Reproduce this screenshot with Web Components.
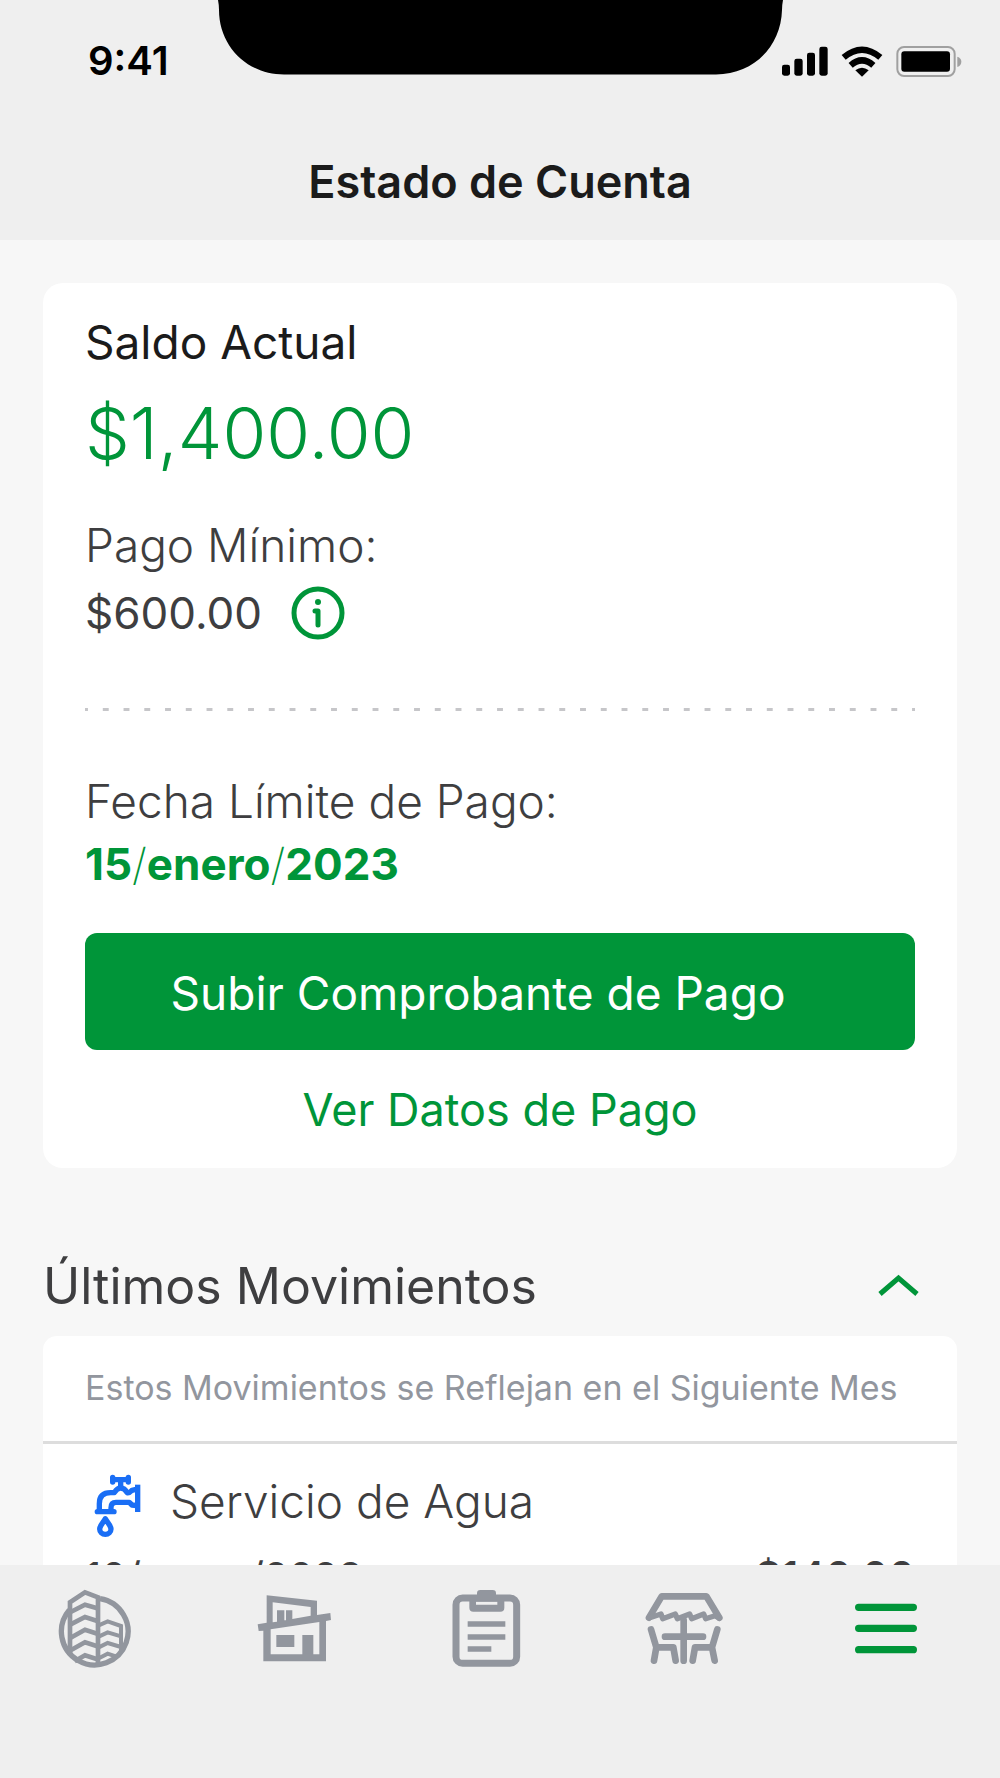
<!DOCTYPE html>
<html lang="es">
<head>
<meta charset="utf-8">
<meta name="viewport" content="width=device-width, initial-scale=1">
<title>Estado de Cuenta</title>
<style>
  :root {
    --green: #009539;
    --ink: #1b1b1b;
    --text: #3e3e40;
    --muted: #92969e;
    --bar: #efefef;
    --page: #f7f7f7;
    --gutter: 43px;
    --inset: 42px;
  }
  html, body { height: 100%; }
  body {
    margin: 0;
    background: var(--page);
    color: var(--text);
    font: 300 46px/56px Inter, "Liberation Sans", sans-serif;
  }
</style>
</head>
<body>
<account-app>
  <status-bar slot="top" time="9:41"></status-bar>
  <screen-title slot="top">Estado de Cuenta</screen-title>

  <balance-card minimum="$600.00" due="15/enero/2023">
    <span slot="label">Saldo Actual</span>
    <span slot="amount">$1,400.00</span>
  </balance-card>

  <movement-list heading="Últimos Movimientos">
    <span slot="note">Estos Movimientos se Reflejan en el Siguiente Mes</span>
    <movement-item date="10/enero/2023" amount="$140.00">Servicio de Agua</movement-item>
  </movement-list>

  <tab-bar slot="bottom"></tab-bar>
</account-app>

<script>
  const define = (name, render) => customElements.define(name, class extends HTMLElement {
    constructor() {
      super();
      this.attachShadow({ mode: 'open' });
    }
    connectedCallback() {
      this.shadowRoot.innerHTML =
        '<style>*{box-sizing:border-box}h1,h2,p,dl,dd,dt{margin:0;font:inherit}button{margin:0;padding:0;border:0;background:none;color:inherit;font:inherit;cursor:pointer}a{color:inherit;text-decoration:none}svg{display:block;flex:none}</style>' +
        render(this);
    }
  });

  define('account-app', () => `
    <style>
      :host { display: flex; flex-direction: column; height: 100vh; }
      header { background: var(--bar); }
      main { flex: 1; min-height: 0; overflow-y: auto; scrollbar-width: none; padding: 43px var(--gutter) 0; }
    </style>
    <header><slot name="top"></slot></header>
    <main><slot></slot></main>
    <slot name="bottom"></slot>`);

  define('status-bar', el => `
    <style>
      :host { display: grid; grid-template-columns: 1fr 564px 1fr; height: 90px; color: #000; font: 600 40px/48px Inter, sans-serif; }
      .notch { display: block; }
      .time { padding: 37px 0 0 88px; }
      .signals { display: flex; align-items: center; gap: 13px; height: 48px; margin-top: 37px; }
    </style>
    <div class="time">${el.getAttribute('time')}</div>
    <svg class="notch" width="566" height="75" viewBox="0 0 566 75" aria-hidden="true">
      <path d="M0 0H565Q564 5 564 10C563 46 536 74.500 498 74.500H66C29 74.500 1 46 1 10Q1 5 0 0Z"/>
    </svg>
    <div class="signals">
      <svg width="46" height="31" viewBox="69 49 138 93" aria-label="Señal">
        <rect x="69" y="105" width="24" height="33" rx="7"/><rect x="106" y="87" width="25" height="51" rx="7"/>
        <rect x="144" y="69" width="24" height="69" rx="7"/><rect x="181" y="51" width="25" height="87" rx="7"/>
      </svg>
      <svg width="42" height="31" viewBox="244 46 126 93" aria-label="Wi-Fi">
        <path d="M287 119Q307 103 327 119L307 138Z"/>
        <path d="M252 80Q307 34 362 80M273 104Q307 74 341 104" fill="none" stroke="#000" stroke-width="19"/>
      </svg>
      <svg width="66" height="31" viewBox="407 47 198 93" aria-label="Batería">
        <rect x="411" y="50" width="172" height="87" rx="20" fill="none" stroke="#a0a0a0" stroke-width="6"/>
        <rect x="423" y="63" width="146" height="61" rx="9"/>
        <path d="M591 79Q603 83 603 94T591 110Z" fill="#a0a0a0"/>
      </svg>
    </div>`);

  define('screen-title', () => `
    <style>
      :host { display: block; padding: 64px 0 30px; text-align: center; color: var(--ink); }
      h1 { font-size: 45px; font-weight: 600; }
    </style>
    <h1><slot></slot></h1>`);

  define('balance-card', el => `
    <style>
      :host { display: flex; flex-direction: column; padding: 31px var(--inset) 30px; border-radius: 20px; background: #fff; }
      .label { color: var(--ink); font-weight: 400; }
      .amount { margin-top: 21px; color: var(--green); font-size: 71px; line-height: 84px; }
      .pair { margin-top: 42px; }
      .minimum { display: flex; align-items: center; gap: 29px; height: 56px; margin-top: 12px; font-size: 44px; font-weight: 400; }
      .rule {
        height: 3px; margin: 67px 0 62px;
        background: linear-gradient(90deg, #c6c6c9 3px, transparent 3px calc(100% - 3px), #c6c6c9 calc(100% - 3px)) 0 0 / 21px 3px round;
      }
      .due { margin-top: 7px; color: var(--green); font-size: 44px; font-weight: 700; }
      .slash { font-weight: 200; }
      .upload { height: 117px; margin-top: 41px; padding: 2px 44px 0 0; border-radius: 12px; background: var(--green); color: #fff; font-weight: 400; }
      .details { align-self: center; margin-top: 32px; color: var(--green); font-size: 45px; font-weight: 400; }
    </style>
    <p class="label"><slot name="label"></slot></p>
    <p class="amount"><slot name="amount"></slot></p>
    <dl class="pair">
      <dt>Pago Mínimo:</dt>
      <dd class="minimum">${el.getAttribute('minimum')}
        <button aria-label="Información">
          <svg width="54" height="54" viewBox="0 0 54 54" fill="none" stroke="var(--green)" stroke-linecap="round" stroke-linejoin="round">
            <circle cx="27" cy="27" r="24" stroke-width="5"/>
            <path d="M24 25H27V39" stroke-width="5"/><circle cx="27" cy="16" r="3" fill="var(--green)" stroke="none"/>
          </svg>
        </button>
      </dd>
    </dl>
    <div class="rule" role="separator"></div>
    <dl>
      <dt>Fecha Límite de Pago:</dt>
      <dd class="due">${el.getAttribute('due').replaceAll('/', '<span class="slash">/</span>')}</dd>
    </dl>
    <button class="upload">Subir Comprobante de Pago</button>
    <a class="details" href="#datos">Ver Datos de Pago</a>`);

  define('movement-list', el => `
    <style>
      :host { display: block; margin-top: 88px; }
      header { display: flex; align-items: center; justify-content: space-between; padding-right: 37px; }
      h2 { font-size: 50px; line-height: 60px; font-weight: 400; }
      section { margin-top: 20px; border-radius: 14px 14px 0 0; background: #fff; }
      .note { padding: 30px var(--inset) 31px; border-bottom: 3px solid #dddddd; color: var(--muted); font-size: 34px; line-height: 44px; font-weight: 400; white-space: nowrap; }
    </style>
    <header>
      <h2>${el.getAttribute('heading')}</h2>
      <button aria-label="Contraer" aria-expanded="true">
        <svg width="43" height="24" viewBox="0 0 43 24" fill="none" stroke="var(--green)" stroke-width="5"><path d="M3 20L21.500 4L40 20"/></svg>
      </button>
    </header>
    <section>
      <p class="note"><slot name="note"></slot></p>
      <slot></slot>
    </section>`);

  define('movement-item', el => `
    <style>
      :host { display: block; padding: 29px var(--inset) 40px; }
      .name { display: flex; gap: 25px; height: 64px; }
      .facts { display: flex; justify-content: space-between; align-items: baseline; margin-top: 15px; font-size: 40px; line-height: 48px; font-weight: 400; }
      .amount { font-size: 41px; font-weight: 500; }
    </style>
    <div class="name">
      <svg width="60" height="64" viewBox="135 42 180 192" fill="none" stroke="#1a6ef5" stroke-width="16" stroke-linecap="round" stroke-linejoin="round" aria-hidden="true">
        <path d="M218 55V69M265 55V69M218 62H265M242 66V84"/>
        <path d="M178 152V134Q178 101 212 101H223Q232 87 242 87Q254 87 261 101Q268 103 276 94L292 90"/>
        <path d="M213 152V146Q213 130 228 130H268L276 138L290 140"/>
        <path d="M172 158H222"/>
        <path d="M293 85V151" stroke-linecap="square"/>
        <path d="M196 179C190 191 179 200 179 210A17 16 0 0 0 213 210C213 200 202 191 196 179Z"/>
      </svg>
      <span><slot></slot></span>
    </div>
    <div class="facts"><span>${el.getAttribute('date')}</span><span class="amount">${el.getAttribute('amount')}</span></div>`);

  const tabs = [
    ['Edificio', '33 39 264 264', `
      <g fill="none" stroke="currentColor" stroke-width="14">
        <path d="M180 86A100 100 0 1 1 88 120" stroke-width="16"/>
        <path d="M90 250V97L135 67L174 82V286"/>
        <path d="M92 126L135 104L172 115M92 163L135 141L172 153M92 203L135 179L172 191M92 241L135 217L172 229M104 274L135 256L172 268"/>
        <path d="M176 166L203 154L243 168V240M176 200L203 187L243 199M176 232L203 219L243 231M178 264L203 251L232 261" stroke-width="12"/>
      </g>`],
    ['Casa', '27 39 264 264', `
      <path fill="currentColor" fill-rule="evenodd" d="M80 76L231 92V135L271 129L273 150L258 153V274H70V182L56 183L53 163L80 158ZM98 97L212 111V137L157 147V121H138V151H133V121H111V155L98 157ZM92 178L238 156V253H220V195H187V253H92ZM109 195V231H163V195Z"/>`],
    ['Pagos', '50 39 264 264', `
      <rect x="77" y="84" width="182" height="196" rx="20" fill="none" stroke="currentColor" stroke-width="21"/>
      <path fill="currentColor" fill-rule="evenodd" d="M117 84H140V70Q140 60 150 60H187Q197 60 197 70V84H222V113Q222 125 210 125H129Q117 125 117 113ZM137 95V104H201V95Z"/>
      <path d="M112 162H225M112 201H225M112 237H183" stroke="currentColor" stroke-width="17"/>`],
    ['Amenidades', '43 39 264 264', `
      <g fill="none" stroke="currentColor" stroke-width="20" stroke-linecap="round" stroke-linejoin="round">
        <path d="M58 143L96 79H230L269 143"/>
        <path d="M58 144L94 132L99 146L137 132L143 146L180 132L186 146L222 132L228 146L256 137L269 145" stroke-width="16"/>
        <path d="M162 150V272M106 200H220M64 178L80 232L73 272M80 232H131L138 272M263 178L247 232L255 272M247 232H196L189 272"/>
      </g>`],
    ['Menú', '426 159 264 264', `
      <path d="M476 232H640M476 295H640M476 359H640" stroke="currentColor" stroke-width="22" stroke-linecap="round"/>`]
  ];

  define('tab-bar', () => `
    <style>
      :host { display: block; height: 213px; background: var(--bar); color: var(--muted); }
      nav { display: flex; justify-content: space-between; padding: 18px 70px 0 51px; }
      [aria-current] { color: var(--green); }
    </style>
    <nav>${tabs.map(([name, box, art]) => `
      <button aria-label="${name}"${name === 'Menú' ? ' aria-current="page"' : ''}>
        <svg width="88" height="88" viewBox="${box}">${art}</svg>
      </button>`).join('')}
    </nav>`);
</script>
</body>
</html>
